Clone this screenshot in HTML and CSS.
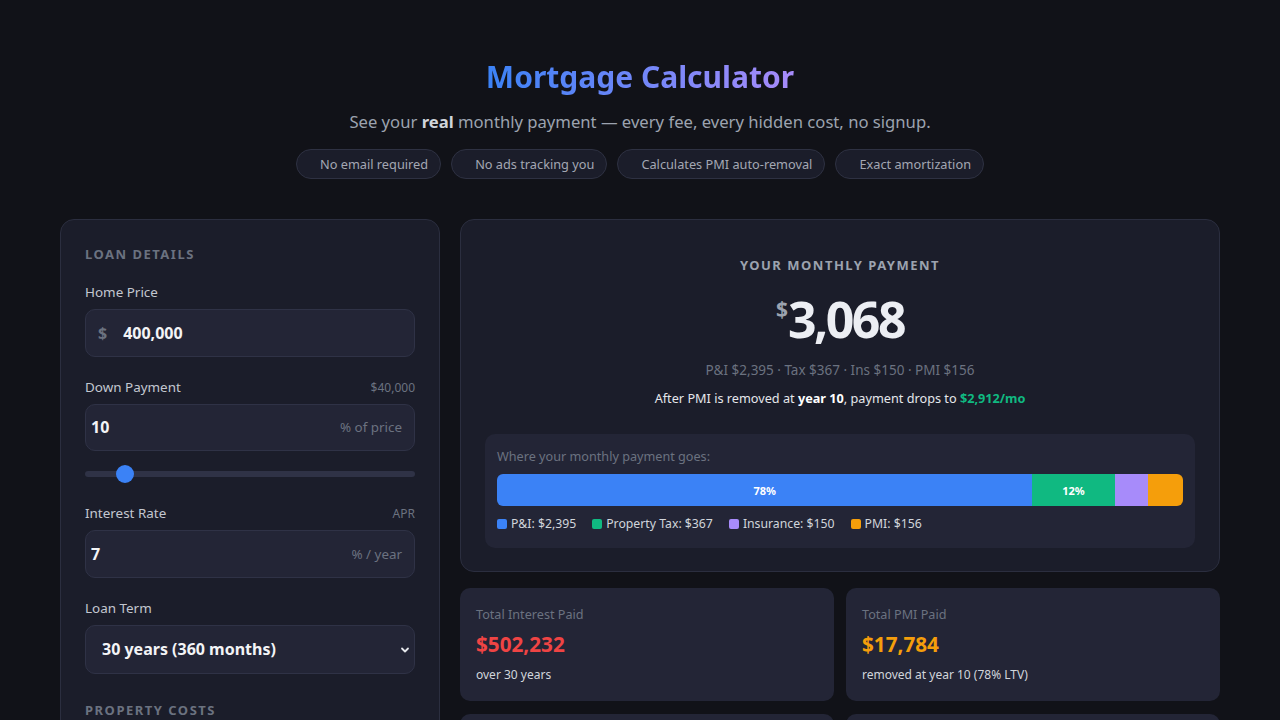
FILE: index.html
```html
<!DOCTYPE html>
<html lang="en">
<head>
  <meta charset="UTF-8">
  <title>Mortgage Calculator</title>
  <meta name="viewport" content="width=device-width, initial-scale=1.0">
  <link rel="stylesheet" href="styles.css">
</head>
<body>
  <div class="page">
    <header class="hero">
      <h1>Mortgage Calculator</h1>
      <p class="tagline">See your <b>real</b> monthly payment — every fee, every hidden cost, no signup.</p>
      <div class="pills">
        <span class="pill">No email required</span>
        <span class="pill">No ads tracking you</span>
        <span class="pill">Calculates PMI auto-removal</span>
        <span class="pill">Exact amortization</span>
      </div>
    </header>

    <main class="layout">
      <!-- inputs -->
      <section class="panel inputs">
        <h2 class="section-title">Loan Details</h2>

        <div class="group">
          <div class="label-row"><label>Home Price</label></div>
          <div class="field">
            <span class="prefix">$</span>
            <input type="text" value="400,000">
          </div>
        </div>

        <div class="group">
          <div class="label-row"><label>Down Payment</label><span class="hint">$40,000</span></div>
          <div class="field tight">
            <input type="text" value="10">
            <span class="suffix">% of price</span>
          </div>
          <input class="slider" type="range" min="0" max="100" value="10">
        </div>

        <div class="group">
          <div class="label-row"><label>Interest Rate</label><span class="hint">APR</span></div>
          <div class="field tight">
            <input type="text" value="7">
            <span class="suffix">% / year</span>
          </div>
        </div>

        <div class="group">
          <div class="label-row"><label>Loan Term</label></div>
          <div class="select-wrap">
            <select>
              <option>30 years (360 months)</option>
              <option>20 years (240 months)</option>
              <option>15 years (180 months)</option>
            </select>
            <svg class="chevron" width="12" height="12" viewBox="0 0 12 12"><path d="M3 4.5l3 3 3-3" fill="none" stroke="#e5e7eb" stroke-width="1.8" stroke-linecap="round" stroke-linejoin="round"/></svg>
          </div>
        </div>

        <h2 class="section-title second">Property Costs</h2>
        <div class="group">
          <div class="label-row"><label>Property Tax</label><span class="hint">per year</span></div>
          <div class="field">
            <span class="prefix">$</span>
            <input type="text" value="4,400">
          </div>
        </div>
      </section>

      <!-- results -->
      <section class="results">
        <div class="panel summary">
          <div class="summary-label">Your Monthly Payment</div>
          <div class="big-amount"><span class="cur">$</span>3,068</div>
          <div class="breakdown-line">P&amp;I $2,395 · Tax $367 · Ins $150 · PMI $156</div>
          <div class="after-pmi">After PMI is removed at <b>year 10</b>, payment drops to <span class="green">$2,912/mo</span></div>

          <div class="split">
            <div class="split-title">Where your monthly payment goes:</div>
            <div class="bar">
              <div class="seg pi" style="width: 78.06%">78%</div>
              <div class="seg tax" style="width: 11.96%">12%</div>
              <div class="seg ins" style="width: 4.89%"></div>
              <div class="seg pmi" style="width: 5.09%"></div>
            </div>
            <div class="legend">
              <span><i class="dot pi"></i>P&amp;I: $2,395</span>
              <span><i class="dot tax"></i>Property Tax: $367</span>
              <span><i class="dot ins"></i>Insurance: $150</span>
              <span><i class="dot pmi"></i>PMI: $156</span>
            </div>
          </div>
        </div>

        <div class="stats">
          <div class="stat">
            <div class="stat-label">Total Interest Paid</div>
            <div class="stat-value red">$502,232</div>
            <div class="stat-sub">over 30 years</div>
          </div>
          <div class="stat">
            <div class="stat-label">Total PMI Paid</div>
            <div class="stat-value orange">$17,784</div>
            <div class="stat-sub">removed at year 10 (78% LTV)</div>
          </div>
          <div class="stat">
            <div class="stat-label">Total Cost of Home</div>
            <div class="stat-value">$1,082,016</div>
            <div class="stat-sub">principal + interest + fees</div>
          </div>
          <div class="stat">
            <div class="stat-label">Payoff Date</div>
            <div class="stat-value">2055</div>
            <div class="stat-sub">360 payments</div>
          </div>
        </div>
      </section>
    </main>
  </div>
</body>
</html>
```

FILE: styles.css
```css
* {
  box-sizing: border-box;
}
body {
  margin: 0;
  background: #111218;
  color: #e5e7eb;
  font-family: "Noto Sans", "Open Sans", sans-serif;
}
.page {
  max-width: 1160px;
  margin: 0 auto;
  padding: 56px 0 40px;
}

/* header */
.hero {
  text-align: center;
}
.hero h1 {
  margin: 0;
  font-size: 30px;
  line-height: 42px;
  font-weight: 700;
  background: linear-gradient(90deg, #3b82f6, #a78bfa);
  -webkit-background-clip: text;
  background-clip: text;
  color: transparent;
  display: inline-block;
  vertical-align: top;
}
.tagline {
  margin: 11px 0 0;
  font-size: 16.65px;
  line-height: 26px;
  color: #9ca3af;
}
.tagline b {
  color: #d1d5db;
}
.pills {
  margin-top: 14px;
  display: flex;
  justify-content: center;
  gap: 10px;
}
.pill {
  height: 30px;
  line-height: 28px;
  padding: 0 12px 0 23px;
  border-radius: 999px;
  background: #1b1d2a;
  border: 1px solid #2e3142;
  font-size: 12.75px;
  color: #a3a7b3;
}

/* columns */
.layout {
  margin-top: 40px;
  display: grid;
  grid-template-columns: 380px 1fr;
  gap: 20px;
  align-items: start;
}
.panel {
  background: #1b1d2a;
  border: 1px solid #2b2e3f;
  border-radius: 14px;
}
.inputs {
  padding: 24px;
}
.section-title {
  margin: 0 0 18px;
  font-size: 13px;
  line-height: 20px;
  font-weight: 700;
  letter-spacing: 1.5px;
  text-transform: uppercase;
  color: #6b7280;
}
.section-title.second {
  margin-top: 26px;
}
.group + .group {
  margin-top: 20px;
}
.label-row {
  display: flex;
  justify-content: space-between;
  align-items: baseline;
  margin-bottom: 7px;
}
.label-row label {
  font-size: 13.45px;
  line-height: 20px;
  color: #c3c7d0;
}
.hint {
  font-size: 12px;
  color: #6b7280;
}
.field {
  display: flex;
  align-items: center;
  height: 47.5px;
  background: #232536;
  border: 1px solid #2f3246;
  border-radius: 10px;
  padding: 0 12px;
}
.field input {
  flex: 1;
  min-width: 0;
  height: 100%;
  background: transparent;
  border: none;
  outline: none;
  color: #f3f4f6;
  font-family: inherit;
  font-size: 16px;
  font-weight: 700;
  padding: 0 16px;
}
.field.tight {
  padding: 0 12px 0 0;
}
.field.tight input {
  padding-left: 5px;
}
.prefix {
  font-size: 16px;
  font-weight: 700;
  color: #6b7280;
}
.suffix {
  font-size: 13.4px;
  color: #6b7280;
}

/* range */
.slider {
  -webkit-appearance: none;
  appearance: none;
  display: block;
  width: 100%;
  height: 18px;
  margin: 14px 0 0;
  background: transparent;
}
.slider::-webkit-slider-runnable-track {
  height: 6px;
  border-radius: 3px;
  background: #2f3246;
}
.slider::-webkit-slider-thumb {
  -webkit-appearance: none;
  width: 18px;
  height: 18px;
  margin-top: -6px;
  border-radius: 50%;
  background: #3b82f6;
  border: none;
}

/* select */
.select-wrap {
  position: relative;
}
.select-wrap select {
  -webkit-appearance: none;
  appearance: none;
  width: 100%;
  height: 49px;
  padding: 0 16px;
  background: #232536;
  border: 1px solid #2f3246;
  border-radius: 10px;
  color: #f3f4f6;
  font-family: inherit;
  font-size: 16px;
  font-weight: 700;
}
.chevron {
  position: absolute;
  right: 4px;
  top: 19px;
  pointer-events: none;
}

/* summary */
.results {
  display: flex;
  flex-direction: column;
  gap: 16px;
}
.summary {
  padding: 35px 24px 23px;
  text-align: center;
}
.summary-label {
  font-size: 13px;
  line-height: 20px;
  font-weight: 700;
  letter-spacing: 1.5px;
  text-transform: uppercase;
  color: #9ca3af;
}
.big-amount {
  margin-top: 16px;
  font-size: 50px;
  line-height: 56px;
  font-weight: 700;
  letter-spacing: -2.5px;
  color: #eceef3;
}
.big-amount .cur {
  font-size: 21px;
  line-height: 1;
  vertical-align: 21px;
  color: #9ca3af;
  letter-spacing: 0;
}
.breakdown-line {
  margin-top: 13px;
  font-size: 13.5px;
  line-height: 20px;
  color: #6b7280;
}
.after-pmi {
  margin-top: 8px;
  font-size: 12.7px;
  line-height: 20px;
  color: #e5e7eb;
}
.after-pmi b {
  color: #fff;
}
.green {
  color: #10b981;
  font-weight: 700;
}
.split {
  margin-top: 26px;
  background: #232536;
  border-radius: 10px;
  padding: 12px 12px 15px;
  text-align: left;
}
.split-title {
  font-size: 12.65px;
  line-height: 20px;
  color: #6b7280;
}
.bar {
  margin-top: 8px;
  display: flex;
  height: 32px;
  border-radius: 6px;
  overflow: hidden;
}
.seg {
  display: flex;
  align-items: center;
  justify-content: center;
  font-size: 11px;
  font-weight: 700;
  color: #fff;
}
.pi { background: #3b82f6; }
.tax { background: #10b981; }
.ins { background: #a78bfa; }
.pmi { background: #f59e0b; }
.legend {
  margin-top: 9px;
  display: flex;
  gap: 16px;
  font-size: 12.25px;
  line-height: 18px;
  color: #d1d5db;
}
.legend span {
  display: flex;
  align-items: center;
}
.dot {
  width: 10px;
  height: 10px;
  border-radius: 2px;
  margin-right: 4px;
}

/* stat cards */
.stats {
  display: grid;
  grid-template-columns: 1fr 1fr;
  column-gap: 12px;
  row-gap: 13px;
}
.stat {
  background: #232536;
  border-radius: 10px;
  padding: 16px 16px 17px;
}
.stat-label {
  font-size: 12.65px;
  line-height: 20px;
  color: #6b7280;
}
.stat-value {
  margin-top: 6px;
  font-size: 20.7px;
  line-height: 28px;
  font-weight: 700;
  color: #e5e7eb;
}
.stat-value.red { color: #ef4444; }
.stat-value.orange { color: #f59e0b; }
.stat-sub {
  margin-top: 8px;
  font-size: 12px;
  line-height: 18px;
  color: #d1d5db;
}
```
